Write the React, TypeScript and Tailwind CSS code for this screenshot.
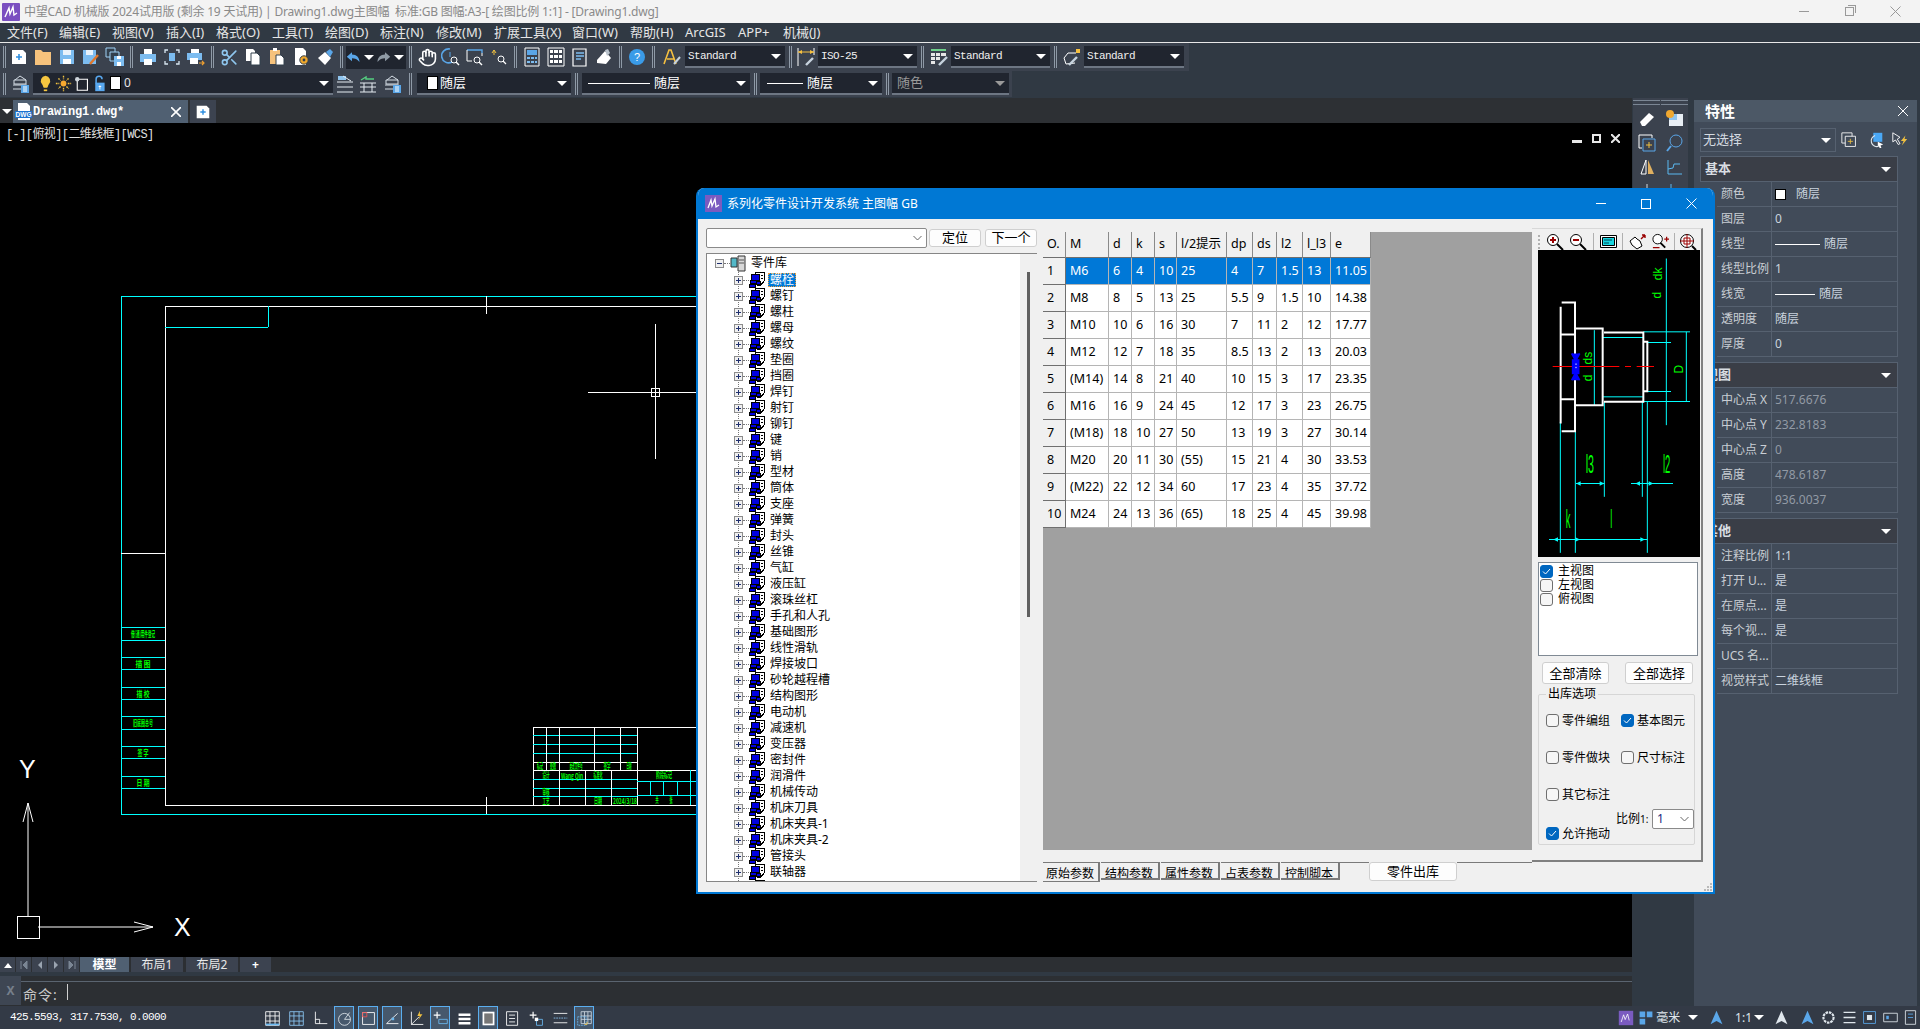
import React from "react";
import { Hand, Scissors } from "lucide-react";

const mono = "font-['Liberation_Mono','Noto_Sans_CJK_SC',monospace]";

const Svg = ({ children, size = 20 }: { children: React.ReactNode; size?: number }) => (
  <svg width={size} height={size} viewBox="0 0 20 20" fill="none">
    {children}
  </svg>
);

const Caret = ({ gray }: { gray?: boolean }) => (
  <span className={`h-0 w-0 border-x-[5px] border-t-[5px] border-x-transparent ${gray ? "border-t-[#9a9a9a]" : "border-t-white"}`} />
);

// ---- toolbar drawings
const icons: Record<string, React.ReactNode> = {
  file: (
    <>
      <path d="M3 3h11l3 3v11H3z" fill="#fff" />
      <path d="M10 7v6M7 10h6" stroke="#2f8fe0" strokeWidth="1.6" />
    </>
  ),
  folder: <path d="M2 3h6l2 2h8v13H2z" fill="#f6c27c" />,
  save: (
    <>
      <path d="M3 3h14v14H3z" fill="#7cbcf0" />
      <path d="M6 3h8v5H6z" fill="#e8f2fb" />
      <path d="M6 12h8v5H6z" fill="#fff" />
    </>
  ),
  saveas: (
    <>
      <path d="M2 3h13v14H2z" fill="#7cbcf0" />
      <path d="M5 3h7v5H5z" fill="#e8f2fb" />
      <path d="M9 17l8-9" stroke="#e0762a" strokeWidth="2.4" />
    </>
  ),
  saveall: (
    <>
      <path d="M1 1h9v9H1z" stroke="#9fd0f5" fill="#33404d" />
      <path d="M5 5h9v9H5z" stroke="#9fd0f5" fill="#33404d" />
      <path d="M9 9h10v10H9z" fill="#7cbcf0" />
      <path d="M12 9h4v3h-4zM12 15h4v4h-4z" fill="#fff" />
    </>
  ),
  print: (
    <>
      <path d="M6 2h8v5H6z" fill="#fff" />
      <path d="M2 7h16v8H2z" fill="#7cbcf0" />
      <path d="M6 12h8v6H6z" fill="#fff" />
    </>
  ),
  preview: (
    <>
      <path d="M3 6V3h3M14 3h3v3M17 14v3h-3M6 17H3v-3" stroke="#d9e7f2" strokeWidth="1.3" />
      <path d="M7 6h6v8H7z" fill="#7cbcf0" />
    </>
  ),
  publish: (
    <>
      <path d="M5 2h8v4H5z" fill="#fff" />
      <path d="M1 6h15v7H1z" fill="#7cbcf0" />
      <path d="M4 11h8v6H4z" fill="#fff" />
      <path d="M13 16h5m-2-2l2 2-2 2" stroke="#f0a030" strokeWidth="1.2" />
    </>
  ),
  copy: (
    <>
      <path d="M3 2h7l2 2v10H3z" fill="#fff" />
      <path d="M8 6h6l3 3v9H8z" fill="#fff" stroke="#33404d" />
    </>
  ),
  paste: (
    <>
      <path d="M3 3h10v14H3z" fill="#f6c27c" />
      <path d="M6 1h4v3H6z" fill="#fff" />
      <path d="M9 8h5l3 3v7H9z" fill="#fff" stroke="#33404d" />
    </>
  ),
  match: (
    <>
      <path d="M4 1h8l3 3v14H4z" fill="#fff" />
      <circle cx="13" cy="13" r="4.2" fill="#f0a82c" stroke="#33404d" />
      <circle cx="13" cy="13" r="1.4" fill="#33404d" />
    </>
  ),
  brush: (
    <>
      <path d="M3 11l7-6 6 6-6 7z" fill="#fff" />
      <path d="M11 5l4-3 3 3-3 5z" fill="#5aa6e8" />
    </>
  ),
  undo: <path d="M8 3L1 9l7 6v-4c4 0 7 1 10 5 0-6-4-10-10-10z" fill="#5aa6e8" />,
  redo: <path d="M12 3l7 6-7 6v-4c-4 0-7 1-10 5 0-6 4-10 10-10z" fill="#8f9aa5" />,
  realtime: (
    <>
      <path d="M9 2a7 7 0 1 0 2 13" stroke="#5aa6e8" strokeWidth="1.6" />
      <path d="M9 5v5" stroke="#5aa6e8" />
      <circle cx="13" cy="13" r="3" stroke="#fff" />
      <path d="M15 15l3 3" stroke="#fff" strokeWidth="1.4" />
    </>
  ),
  zoomwin: (
    <>
      <path d="M2 3h15v3" stroke="#5aa6e8" strokeWidth="1.4" />
      <path d="M2 3v11h5M17 6v3" stroke="#fff" />
      <circle cx="12" cy="13" r="3" stroke="#fff" />
      <path d="M14 15l3 3" stroke="#fff" strokeWidth="1.4" />
    </>
  ),
  zoomprev: (
    <>
      <path d="M3 6l2-3 2 3M5 3v5" stroke="#f0c040" />
      <circle cx="12" cy="12" r="3" stroke="#fff" />
      <path d="M14 14l3 3" stroke="#fff" strokeWidth="1.3" />
    </>
  ),
  calc: (
    <>
      <path d="M3 1h14v18H3z" stroke="#fff" />
      <path d="M5 3h10v5H5z" fill="#5aa6e8" />
      <path d="M5 10h3v2H5zM9 10h3v2H9zM13 10h2v2h-2zM5 14h3v2H5zM9 14h3v2H9zM13 14h2v2h-2z" fill="#7cbcf0" />
    </>
  ),
  grid: (
    <>
      <path d="M2 1h16v18H2z" stroke="#fff" />
      <path d="M4 3h3v3H4zM8 3h4v3H8zM13 3h3v3h-3zM4 8h3v3H4zM8 8h4v3H8zM13 8h3v3h-3zM4 13h3v3H4zM8 13h4v3H8zM13 13h3v3h-3z" fill="#fff" />
    </>
  ),
  props: (
    <>
      <path d="M3 2h13v17H3z" stroke="#fff" strokeWidth="1.2" />
      <path d="M6 6h8M6 9h8M6 12h5" stroke="#7cbcf0" strokeWidth="1.4" />
    </>
  ),
  paper: (
    <>
      <path d="M3 13l8-9 6 7-5 6-9-1z" fill="#fff" />
      <path d="M11 3l3-1 2 4-3 3z" fill="#b9c2cb" />
    </>
  ),
  help: (
    <>
      <circle cx="10" cy="10" r="8" fill="#3a9be8" />
      <text x="10" y="14" fontSize="11" textAnchor="middle" fill="#fff" fontFamily="Liberation Sans">?</text>
    </>
  ),
  textstyle: (
    <>
      <path d="M2 17L7 3h2l5 14M5 12h7" stroke="#f6c040" strokeWidth="1.6" />
      <path d="M12 17l6-7" stroke="#c7d3de" strokeWidth="2" />
    </>
  ),
  dim: (
    <>
      <path d="M1 1v18M17 1v7" stroke="#fff" />
      <path d="M1 5l4-2v4zM17 5l-4-2v4z" fill="#f6c040" />
      <path d="M1 5h16" stroke="#f6c040" />
      <path d="M9 18l7-7" stroke="#c7d3de" strokeWidth="2.4" />
    </>
  ),
  table: (
    <>
      <path d="M2 2h15v2H2z" fill="#6fd08a" />
      <path d="M2 6h4v3H2zM7 6h4v3H7zM12 6h5v3h-5zM2 10h4v3H2zM7 10h4v3H7zM2 14h4v3H2z" fill="#e6e6e6" />
      <path d="M10 18l8-8" stroke="#c7d3de" strokeWidth="2.4" />
    </>
  ),
  leader: (
    <>
      <path d="M14 2h4v4h-4z" fill="#f6c040" />
      <path d="M2 11l4-5h8M2 11l2 6M4 17l9-1" stroke="#fff" />
      <path d="M7 18l8-8" stroke="#c7d3de" strokeWidth="2.4" />
    </>
  ),
  layers: (
    <>
      <path d="M5 6l5-4 6 4M3 11h14M3 15h8" stroke="#d6dee6" />
      <path d="M4 6h12v4H4z" stroke="#d6dee6" />
      <path d="M11 11h8v8h-8z" fill="#5aa6e8" />
      <path d="M13 13h4M13 15h4M13 17h4" stroke="#fff" />
    </>
  ),
  bulb: (
    <>
      <path d="M10 1a6 6 0 0 0-4 10c1 1 1 3 2 4h4c1-1 1-3 2-4a6 6 0 0 0-4-10z" fill="#f6c640" />
      <path d="M8 17h4v2H8z" fill="#f6c640" />
    </>
  ),
  sun: (
    <>
      <circle cx="10" cy="10" r="3.4" fill="#f6a930" />
      <path d="M10 1v4M10 15v4M1 10h4M15 10h4M4 4l2.500 2.500M13.500 13.500L16 16M16 4l-2.500 2.500M6.500 13.500L4 16" stroke="#f6c640" strokeWidth="1.6" strokeDasharray="2 1" />
    </>
  ),
  frozen: (
    <>
      <path d="M5 5h12v13H5z" stroke="#fff" strokeWidth="1.3" />
      <circle cx="5" cy="5" r="2.6" fill="#cfd6dc" />
    </>
  ),
  lock: (
    <>
      <path d="M6 10V5a3.500 3.500 0 0 1 7 0" stroke="#58a8f0" strokeWidth="1.8" />
      <path d="M5 9h11v10H5z" fill="#58a8f0" />
      <path d="M10.500 12l2 2h-4z" fill="#fff" />
      <path d="M10 14h1v3h-1z" fill="#fff" />
    </>
  ),
  layerPrev: (
    <>
      <path d="M3 2h8v4H3z" fill="#8fc4ee" />
      <path d="M8 2l8 5M2 8h16M2 13h16M2 18h16" stroke="#e6ecf2" />
    </>
  ),
  layerIso: (
    <>
      <path d="M3 6l5-3v2h8" stroke="#54d080" strokeWidth="1.4" />
      <path d="M2 9h16M2 13h16M2 18h16" stroke="#e6ecf2" />
      <path d="M6 9v9M14 9v9" stroke="#e6ecf2" />
    </>
  ),
};

const Ico = ({ n, w = "w-[24px]" }: { n: string; w?: string }) => (
  <span className={`flex h-full shrink-0 items-center justify-center ${w}`}>
    <Svg>{icons[n]}</Svg>
  </span>
);

const Sep = ({ w = "w-[9px]" }: { w?: string }) => (
  <span className={`flex h-full shrink-0 items-center justify-center gap-[1px] ${w}`}>
    <span className="h-[22px] w-[1px] bg-[#8f9aa7]" />
    <span className="h-[22px] w-[1px] bg-[#8f9aa7]" />
  </span>
);

const Combo = ({ w, children, gray }: { w: string; children: React.ReactNode; gray?: boolean }) => (
  <span className={`flex h-[22px] shrink-0 items-center justify-between border-b-2 border-[#6d7683] bg-[#20252f] pl-[3px] pr-[4px] ${w}`}>
    <span className="flex min-w-0 items-center">{children}</span>
    <Caret gray={gray} />
  </span>
);

const Std = ({ t }: { t: string }) => (
  <span className={`${mono} text-[11px] tracking-[-0.6px] text-[#f0f0f0]`}>{t}</span>
);

const menu: [string, string][] = [
  ["文件(F)", "w-[52px]"],
  ["编辑(E)", "w-[53px]"],
  ["视图(V)", "w-[54px]"],
  ["插入(I)", "w-[50px]"],
  ["格式(O)", "w-[56px]"],
  ["工具(T)", "w-[53px]"],
  ["绘图(D)", "w-[55px]"],
  ["标注(N)", "w-[56px]"],
  ["修改(M)", "w-[58px]"],
  ["扩展工具(X)", "w-[78px]"],
  ["窗口(W)", "w-[58px]"],
  ["帮助(H)", "w-[55px]"],
  ["ArcGIS", "w-[53px]"],
  ["APP+", "w-[45px]"],
  ["机械(J)", "w-[50px]"],
];

function TopBars() {
  return (
    <>
      <div className="flex h-[23px] items-center bg-[#f3f3f3]">
        <svg width="18" height="18" viewBox="0 0 18 18" className="ml-[2px] mr-[4px]">
          <rect width="18" height="18" rx="1" fill="#7a4fc0" />
          <path d="M3 14l4-9 1 6 3-7 1 8 3-2" stroke="#fff" strokeWidth="1.4" fill="none" />
        </svg>
        <span className="whitespace-nowrap text-[12px] tracking-[-0.2px] text-[#8a8a8a]">
          中望CAD 机械版 2024试用版 (剩余 19 天试用) | Drawing1.dwg主图幅&nbsp;&nbsp;标准:GB 图幅:A3-[ 绘图比例 1:1] - [Drawing1.dwg]
        </span>
        <div className="ml-auto flex items-center pr-[19px] text-[#8f8f8f]">
          <span className="mr-[36px] h-[1px] w-[10px] bg-[#999]" />
          <span className="relative mr-[36px] h-[9px] w-[9px] border border-[#999]">
            <span className="absolute -right-[3px] -top-[3px] h-[8px] w-[8px] border-r border-t border-[#999]" />
          </span>
          <svg width="11" height="11" viewBox="0 0 11 11"><path d="M.500.500l10 10M10.500.500l-10 10" stroke="#999" /></svg>
        </div>
      </div>
      <div className="flex h-[20px] items-center border-b border-[#e8e8e8] bg-[#303943] pl-[7px] text-[13px] leading-none text-[#e6e6e6]">
        {menu.map(([t, w]) => (
          <span key={t} className={`shrink-0 whitespace-nowrap ${w}`}>{t}</span>
        ))}
      </div>
      <div className="h-[55px] bg-[#303943]">
        <div className="flex h-[28px] w-[1189px] items-center bg-[#3b424e] pl-[2px]">
          <Sep w="w-[5px]" />
          {["file", "folder", "save", "saveas", "saveall"].map((n) => <Ico key={n} n={n} />)}
          <Sep />
          {["print", "preview", "publish"].map((n) => <Ico key={n} n={n} />)}
          <Sep />
          <span className="flex h-full w-[24px] shrink-0 items-center justify-center"><Scissors size={19} color="#8fc7ef" /></span>
          {["copy", "paste", "match", "brush"].map((n) => <Ico key={n} n={n} />)}
          <Sep />
          <span className="flex h-[23px] w-[60px] shrink-0 items-center bg-[#20252f]">
            <span className="flex w-[15px] justify-center"><Svg size={15}>{icons.undo}</Svg></span>
            <span className="flex w-[15px] justify-center"><Caret /></span>
            <span className="flex w-[15px] justify-center"><Svg size={15}>{icons.redo}</Svg></span>
            <span className="flex w-[15px] justify-center"><Caret /></span>
          </span>
          <Sep />
          <span className="flex h-full w-[24px] shrink-0 items-center justify-center"><Hand size={19} color="#fff" /></span>
          {["realtime", "zoomwin", "zoomprev"].map((n) => <Ico key={n} n={n} />)}
          <Sep />
          {["calc", "grid", "props", "paper"].map((n) => <Ico key={n} n={n} />)}
          <Sep />
          <Ico n="help" />
          <Sep />
          <Ico n="textstyle" w="w-[27px]" />
          <Combo w="w-[100px]"><Std t="Standard" /></Combo>
          <Sep w="w-[10px]" />
          <Ico n="dim" w="w-[23px]" />
          <Combo w="w-[99px]"><Std t="ISO-25" /></Combo>
          <Sep w="w-[10px]" />
          <Ico n="table" />
          <Combo w="w-[99px]"><Std t="Standard" /></Combo>
          <Sep w="w-[10px]" />
          <Ico n="leader" />
          <Combo w="w-[100px]"><Std t="Standard" /></Combo>
        </div>
        <div className="flex h-[26px] w-[1012px] items-center bg-[#3b424e] pl-[2px]">
          <Sep w="w-[5px]" />
          <Ico n="layers" w="w-[26px]" />
          <Combo w="w-[300px]">
            <span className="ml-[1px] flex items-center">
              <span className="w-[18px]"><Svg size={17}>{icons.bulb}</Svg></span>
              <span className="w-[18px]"><Svg size={17}>{icons.sun}</Svg></span>
              <span className="w-[18px]"><Svg size={17}>{icons.frozen}</Svg></span>
              <span className="w-[19px]"><Svg size={17}>{icons.lock}</Svg></span>
              <span className="h-[14px] w-[11px] border border-black bg-white" />
              <span className="ml-[3px] text-[12px] text-[#e6e6e6]">0</span>
            </span>
          </Combo>
          <Ico n="layerPrev" w="w-[23px]" />
          <Ico n="layerIso" />
          <Ico n="layers" />
          <Sep w="w-[13px]" />
          <Combo w="w-[154px]">
            <span className="ml-[7px] h-[14px] w-[11px] border border-black bg-white" />
            <span className="ml-[2px] text-[13px] text-white">随层</span>
          </Combo>
          <Sep w="w-[11px]" />
          <Combo w="w-[168px]">
            <span className="ml-[3px] h-[1px] w-[62px] bg-white" />
            <span className="ml-[4px] text-[13px] text-white">随层</span>
          </Combo>
          <Sep w="w-[10px]" />
          <Combo w="w-[122px]">
            <span className="ml-[4px] h-[1px] w-[36px] bg-white" />
            <span className="ml-[4px] text-[13px] text-white">随层</span>
          </Combo>
          <Sep w="w-[10px]" />
          <Combo w="w-[117px]" gray><span className="ml-[2px] text-[13px] text-[#9a9a9a]">随色</span></Combo>
        </div>
      </div>
    </>
  );
}

// ---- model space
const cy = "#00ffff";
const gn = "#00ff00";
const sideRows: [number, number, string, number][] = [
  [627, 640, "借(通)用件登记", 24],
  [657, 669, "描  图", 15],
  [687, 699, "描  校", 13],
  [716, 729, "旧底图总号", 20],
  [746, 758, "签  字", 11],
  [776, 788, "日  期", 13],
];

function Drawing() {
  const L = (x1: number, y1: number, x2: number, y2: number, c = "#fff") => (
    <line key={`${x1}-${y1}-${x2}-${y2}`} x1={x1} y1={y1} x2={x2} y2={y2} stroke={c} />
  );
  const T = (x: number, y: number, s: string, len: number) => (
    <text key={`${x}-${y}`} x={x - len / 2} y={y} fontSize="8" fontWeight="700" fill={gn} textLength={len} lengthAdjust="spacingAndGlyphs" fontFamily="Noto Sans CJK SC">{s}</text>
  );
  return (
    <svg className="absolute inset-0" width="1632" height="834" viewBox="0 123 1632 834" shapeRendering="crispEdges">
      {L(121, 296, 1000, 296, cy)}
      {L(121, 296, 121, 814, cy)}
      {L(121, 814, 1000, 814, cy)}
      {L(165, 306, 1000, 306)}
      {L(165, 306, 165, 805)}
      {L(165, 805, 1000, 805)}
      {L(165, 327, 268, 327, cy)}
      {L(268, 306, 268, 327, cy)}
      {L(486, 296, 486, 314)}
      {L(486, 797, 486, 814)}
      {L(121, 553, 165, 553)}
      {sideRows.map(([a, b, s, len]) => (
        <g key={a}>
          {L(121, a, 165, a, cy)}
          {L(121, b, 165, b, cy)}
          {T(143, a + 10, s, len)}
        </g>
      ))}
      {/* title block */}
      {L(533, 727, 700, 727)}
      {L(533, 727, 533, 805)}
      {[735, 744, 753].map((y) => L(533, y, 637, y, cy))}
      {L(533, 762, 637, 762)}
      {L(533, 770, 700, 770)}
      {[779, 788, 796].map((y) => L(533, y, 637, y, cy))}
      {L(546, 727, 546, 770)}
      {L(559, 727, 559, 805)}
      {L(594, 727, 594, 770)}
      {L(620, 727, 620, 770)}
      {L(637, 727, 637, 805)}
      {L(585, 770, 585, 805)}
      {L(611, 770, 611, 805)}
      {L(637, 781, 700, 781, cy)}
      {L(637, 795, 700, 795, cy)}
      {L(650, 781, 650, 795, cy)}
      {L(663, 781, 663, 795, cy)}
      {L(677, 781, 677, 795, cy)}
      {L(690, 770, 690, 805, cy)}
      {T(540, 769, "标记", 6)}
      {T(553, 769, "处数", 6)}
      {T(576, 769, "更改文件号", 13)}
      {T(607, 769, "签字", 7)}
      {T(629, 769, "日期", 5)}
      {T(546, 778, "设计", 7)}
      {T(572, 779, "Wang Qin", 22)}
      {T(598, 778, "标准化", 9)}
      {T(546, 795, "审核", 7)}
      {T(546, 804, "工艺", 7)}
      {T(598, 804, "日期", 8)}
      {T(625, 804, "2024/3/18", 24)}
      {T(664, 778, "阶段标记", 16)}
      {T(657, 803, "共", 3)}
      {T(671, 803, "张", 3)}
      {/* crosshair */}
      {L(588, 392, 722, 392)}
      {L(655, 324, 655, 459)}
      <rect x="651" y="388" width="8" height="8" stroke="#fff" fill="none" />
      {/* ucs */}
      <path d="M28 916V803M23 822l5-19 5 19M38 927H153M134 922l19 5-19 5" stroke="#fff" fill="none" shapeRendering="auto" />
      <rect x="17" y="916" width="22" height="22" stroke="#fff" fill="none" />
      <text x="19" y="778" fontSize="25" fill="#fff" fontFamily="Liberation Sans">Y</text>
      <text x="174" y="936" fontSize="25" fill="#fff" fontFamily="Liberation Sans">X</text>
    </svg>
  );
}

function Preview() {
  const w = (d: string) => <path key={d} d={d} stroke="#fff" strokeWidth="6" fill="none" />;
  const c = (d: string) => <path key={d} d={d} stroke={cy} strokeWidth="3" fill="none" />;
  const rot = (x: number, y: number, s: string, fs = 36) => (
    <text key={`${x}${y}`} transform={`translate(${x} ${y}) rotate(-90)`} fontSize={fs} fill={gn} fontFamily="Liberation Sans">{s}</text>
  );
  const thin = (x: number, y: number, s: string, len: number) => (
    <text key={`${x}${y}`} x={x} y={y} fontSize="76" fill={gn} textLength={len} lengthAdjust="spacingAndGlyphs" fontFamily="Liberation Sans">{s}</text>
  );
  return (
    <svg width="162" height="307" viewBox="24 75 486 920" className="block bg-black">
      {["M409 100V600", "M340 320H480M340 529H480M469 320V529M352 352H423M352 499H423M217 337H340M217 515H340M193 315V540M223 530V815M337 530V815M352 530V983M91 590V983M136 618V983M138 775H223M303 775H429M57 943H352"].map(c)}
      {["M95 232H135V618H95M92 245V595M95 328H135M95 522H135M135 310H218V540H135M222 322H340V530H222M340 350H352V498H340"].map(w)}
      <path d="M68 424H268M285 424H303M320 424H372" stroke="#f00" strokeWidth="3" />
      <path d="M125 385l12 22 12-22M125 465l12-22 12 22M128 405h18v40h-18z" stroke="#0000ff" strokeWidth="5" fill="#0000ff" />
      <path d="M138 415v20" stroke="#fff" strokeWidth="3" strokeDasharray="4 6" />
      <path d="M138 775l14-7v14zM223 775l-14-7v14zM316 775l14-7v14zM370 775l-14-7v14zM70 943l14-7v14zM150 943l-14-7v14zM345 943l-14-7v14z" fill={cy} />
      {rot(395, 165, "dk")}
      {rot(393, 220, "d")}
      {rot(186, 418, "ds")}
      {rot(186, 468, "d")}
      {rot(460, 445, "D")}
      {thin(167, 745, "l3", 25)}
      {thin(399, 745, "l2", 22)}
      {thin(107, 908, "k", 14)}
      {thin(241, 908, "l", 6)}
    </svg>
  );
}

// ---- dialog
const treeItems = "螺栓 螺钉 螺柱 螺母 螺纹 垫圈 挡圈 焊钉 射钉 铆钉 键 销 型材 筒体 支座 弹簧 封头 丝锥 气缸 液压缸 滚珠丝杠 手孔和人孔 基础图形 线性滑轨 焊接坡口 砂轮越程槽 结构图形 电动机 减速机 变压器 密封件 润滑件 机械传动 机床刀具 机床夹具-1 机床夹具-2 管接头 联轴器".split(" ");

const TreeBox = ({ open }: { open?: boolean }) => (
  <span className="relative z-10 flex h-[9px] w-[9px] shrink-0 items-center justify-center border border-[#8c8c8c] bg-[#f0f0f0]">
    <span className="h-[1px] w-[5px] bg-[#20306e]" />
    {!open && <span className="absolute h-[5px] w-[1px] bg-[#20306e]" />}
  </span>
);

const PartIcon = () => (
  <svg width="16" height="16" viewBox="0 0 16 16" className="shrink-0" shapeRendering="crispEdges">
    <path d="M6.500.500h9v8l-4 5h-3z" fill="#fff" stroke="#000" />
    <path d="M2.500 2.500h8v6h-8z" fill="#0000e0" stroke="#000" />
    <path d="M11.500 3.500h2M11.500 6.500h2" stroke="#000" />
    <path d="M1.500 8.500h6v3h-6zM.500 12.500h6v3h-6z" fill="#0000e0" stroke="#000" />
    <path d="M7.500 9.500h4v3h-4z" fill="#0000e0" stroke="#000" />
  </svg>
);

function Tree() {
  return (
    <div className="mt-[5px] flex h-[629px] border border-r-0 border-[#868686] bg-white">
      <div className="relative min-w-0 flex-1 overflow-hidden text-[12px] leading-none text-black">
        <span className="absolute bottom-0 left-[31px] top-[18px] border-l border-dotted border-[#777]" />
        <div className="flex h-[18px] items-center pl-[8px]">
          <TreeBox open />
          <span className="w-[6px] border-t border-dotted border-[#777]" />
          <svg width="16" height="17" viewBox="0 0 16 17" className="shrink-0">
            <path d="M1 3h6v9H1z" fill="#53b8c8" stroke="#333" />
            <path d="M8 1h7v15H8z" fill="#d8d8d8" stroke="#333" />
            <path d="M9 5h5M9 8h5" stroke="#555" />
          </svg>
          <span className="ml-[5px]">零件库</span>
        </div>
        {[...treeItems, ""].map((t, i) => (
          <div key={t} className="flex h-[16px] items-center pl-[27px]">
            <TreeBox />
            <span className="w-[6px] border-t border-dotted border-[#777]" />
            <PartIcon />
            <span className={`ml-[3px] px-[2px] py-[1px] ${i === 0 ? "bg-[#0078d7] text-white outline-1 -outline-offset-1 outline-dotted outline-[#f0a040]" : ""}`}>{t}</span>
          </div>
        ))}
      </div>
      <div className="w-[17px] shrink-0 bg-[#f0f0f0]">
        <div className="mx-auto mt-[18px] h-[345px] w-[3px] bg-[#606060]" />
      </div>
    </div>
  );
}

const cols = ["w-[23px]", "w-[43px]", "w-[23px]", "w-[23px]", "w-[22px]", "w-[50px]", "w-[26px]", "w-[24px]", "w-[26px]", "w-[28px]", "w-[40px]"];
const head = ["O.", "M", "d", "k", "s", "l/2提示", "dp", "ds", "l2", "l_l3", "e"];
const rows = [
  ["1", "M6", "6", "4", "10", "25", "4", "7", "1.5", "13", "11.05"],
  ["2", "M8", "8", "5", "13", "25", "5.5", "9", "1.5", "10", "14.38"],
  ["3", "M10", "10", "6", "16", "30", "7", "11", "2", "12", "17.77"],
  ["4", "M12", "12", "7", "18", "35", "8.5", "13", "2", "13", "20.03"],
  ["5", "(M14)", "14", "8", "21", "40", "10", "15", "3", "17", "23.35"],
  ["6", "M16", "16", "9", "24", "45", "12", "17", "3", "23", "26.75"],
  ["7", "(M18)", "18", "10", "27", "50", "13", "19", "3", "27", "30.14"],
  ["8", "M20", "20", "11", "30", "(55)", "15", "21", "4", "30", "33.53"],
  ["9", "(M22)", "22", "12", "34", "60", "17", "23", "4", "35", "37.72"],
  ["10", "M24", "24", "13", "36", "(65)", "18", "25", "4", "45", "39.98"],
];

function PartTable() {
  return (
    <div className="h-[618px] w-[489px] bg-[#a0a0a0] text-[12.5px] leading-none text-black">
      <div className="flex h-[26px]">
        {head.map((h, i) => (
          <span key={h} className={`flex h-full shrink-0 items-center overflow-hidden whitespace-nowrap border-b border-r border-b-[#6f6f6f] border-r-[#8a8a8a] bg-[#f0f0f0] pl-[4px] ${cols[i]}`}>{h}</span>
        ))}
      </div>
      {rows.map((r, ri) => (
        <div key={r[0]} className="flex h-[27px]">
          {r.map((c, i) => (
            <span
              key={i}
              className={`flex h-full shrink-0 items-center whitespace-nowrap border-b border-r pl-[4px] ${cols[i]} ${
                i === 0
                  ? "border-b-[#6f6f6f] border-r-[#6f6f6f] bg-[#f0f0f0]"
                  : ri === 0
                    ? "border-[#b5b5b5] bg-[#0078d7] text-white"
                    : "border-[#b5b5b5] bg-white"
              }`}
            >
              {c}
            </span>
          ))}
        </div>
      ))}
    </div>
  );
}

const Cb = ({ on }: { on?: boolean }) => (
  <span className={`flex h-[13px] w-[13px] shrink-0 items-center justify-center rounded-[3px] border ${on ? "border-[#0067c0] bg-[#0067c0]" : "border-[#6f6f6f] bg-[#f6f6f6]"}`}>
    {on && <svg width="9" height="9" viewBox="0 0 9 9"><path d="M1 4.500l2.500 2.500L8 2" stroke="#fff" fill="none" /></svg>}
  </span>
);

const Opt = ({ on, t, w }: { on?: boolean; t: string; w?: string }) => (
  <span className={`flex items-center gap-[3px] ${w ?? ""}`}>
    <Cb on={on} />
    <span>{t}</span>
  </span>
);

const Btn = ({ t, w }: { t: string; w: string }) => (
  <span className={`flex shrink-0 items-center justify-center rounded-[3px] border border-[#cfcfcf] bg-[#fdfdfd] text-[13px] text-black ${w}`}>{t}</span>
);

const ToolIcon = ({ children, w = "w-[23px]" }: { children: React.ReactNode; w?: string }) => (
  <span className={`flex h-full shrink-0 items-center justify-center ${w}`}>{children}</span>
);

const Lens = ({ sign }: { sign: "+" | "-" }) => (
  <svg width="18" height="18" viewBox="0 0 18 18">
    <circle cx="7" cy="7" r="5.500" fill="#fff" stroke="#000" />
    <path d="M11 11l6 6" stroke="#000" strokeWidth="2" />
    <path d={sign === "+" ? "M4 7h6M7 4v6" : "M4 7h6"} stroke="#900" strokeWidth="2" />
  </svg>
);

function RightPane() {
  return (
    <div className="h-[634px] w-[171px] shrink-0 border-b-2 border-r-2 border-t border-b-[#808080] border-r-[#808080] border-t-[#d8d8d8] text-[12px] leading-none text-black">
      <div className="ml-[6px] flex h-[21px] items-center pt-[4px]">
        <span className="h-[14px] w-[3px] border-l-2 border-dotted border-[#b0b0b0]" />
        <ToolIcon w="w-[28px]"><Lens sign="+" /></ToolIcon>
        <ToolIcon w="w-[18px]"><Lens sign="-" /></ToolIcon>
        <span className="ml-[6px] h-[17px] w-[1px] bg-[#b0b0b0]" />
        <ToolIcon w="w-[28px]">
          <svg width="17" height="13" viewBox="0 0 17 13"><path d="M.500.500h16v12H.500z" fill="#fff" stroke="#000" /><path d="M2.500 2.500h12v8h-12z" fill="#19d6e0" stroke="#000" /><path d="M4 5h8M4 8h5" stroke="#045" /></svg>
        </ToolIcon>
        <span className="h-[17px] w-[1px] bg-[#b0b0b0]" />
        <ToolIcon w="w-[28px]">
          <svg width="17" height="16" viewBox="0 0 17 16"><path d="M1 7l5-4 2 2 3 2 2 5-5 3-5-4z" fill="#fff" stroke="#000" /><path d="M12 5l4-4M16 1v3M16 1h-3" stroke="#900" strokeWidth="1.4" /></svg>
        </ToolIcon>
        <ToolIcon w="w-[18px]">
          <svg width="19" height="18" viewBox="0 0 19 18"><circle cx="7" cy="6" r="5" fill="#fff" stroke="#000" /><path d="M10 10l5 5" stroke="#000" strokeWidth="2" /><path d="M14 6h5M16.500 3.500v5M2 15h7" stroke="#900" strokeWidth="1.300" /></svg>
        </ToolIcon>
        <span className="ml-[5px] h-[17px] w-[1px] bg-[#b0b0b0]" />
        <ToolIcon w="w-[26px]">
          <svg width="18" height="18" viewBox="0 0 18 18"><circle cx="8" cy="8" r="6.500" fill="#fff" stroke="#000" /><path d="M1 8h14M8 1v14M5 5h6v6H5z" stroke="#900" fill="none" /><path d="M13 13l4 4" stroke="#000" strokeWidth="2" /></svg>
        </ToolIcon>
      </div>
      <div className="ml-[6px] h-[307px] w-[162px]"><Preview /></div>
      <div className="ml-[6px] mt-[5px] h-[94px] w-[160px] border border-[#808a94] bg-white pl-[1px] pt-[1px]">
        {[["主视图", true], ["左视图", false], ["俯视图", false]].map(([t, on]) => (
          <div key={t as string} className="flex h-[14px] items-center gap-[5px]">
            <Cb on={on as boolean} />
            <span className="text-[12px]">{t as string}</span>
          </div>
        ))}
      </div>
      <div className="ml-[10px] mt-[6px] flex gap-[16px]">
        <Btn t="全部清除" w="h-[22px] w-[67px]" />
        <Btn t="全部选择" w="h-[22px] w-[68px]" />
      </div>
      <div className="relative ml-[6px] mt-[10px] h-[151px] w-[157px] rounded-[2px] border border-[#d6d6d6] pl-[7px] pt-[7px]">
        <span className="absolute -top-[7px] left-[7px] bg-[#f0f0f0] px-[2px] text-[12px]">出库选项</span>
        <div className="flex h-[37px] items-center"><Opt t="零件编组" w="w-[75px]" /><Opt on t="基本图元" /></div>
        <div className="flex h-[37px] items-center"><Opt t="零件做块" w="w-[75px]" /><Opt t="尺寸标注" /></div>
        <div className="flex h-[37px] items-center"><Opt t="其它标注" /></div>
        <div className="flex h-[32px]">
          <span className="flex w-[71px] items-end pb-[5px]"><Opt on t="允许拖动" /></span>
          <span className="-mt-[4px] flex h-[20px] items-center">
            <span className="w-[36px]">比例<span className="text-[10px]">1:</span></span>
            <span className="flex h-[20px] w-[42px] items-center justify-between rounded-[2px] border border-[#8a8a8a] bg-white px-[4px] text-[#1a2a80]">
              1
              <svg width="9" height="6" viewBox="0 0 9 6"><path d="M.500 1l4 4 4-4" stroke="#666" fill="none" /></svg>
            </span>
          </span>
        </div>
      </div>
    </div>
  );
}

function Dialog() {
  const tabs = ["结构参数", "属性参数", "占表参数", "控制脚本"];
  return (
    <div className="absolute left-[696px] top-[188px] h-[706px] w-[1019px] overflow-hidden rounded-t-[8px] border-x-2 border-b-2 border-[#0078d4] bg-[#f0f0f0]">
      <div className="-mx-[2px] flex h-[31px] items-center bg-[#0078d4] pl-[9px] text-[12px] text-white">
        <svg width="17" height="17" viewBox="0 0 17 17" className="mr-[5px]">
          <rect width="17" height="17" fill="#7a5bc0" />
          <path d="M3 13l3-8 1 6 3-7 1 8 3-2" stroke="#fff" strokeWidth="1.300" fill="none" />
        </svg>
        <span className="whitespace-nowrap">系列化零件设计开发系统 主图幅 GB</span>
        <div className="ml-auto flex items-center">
          <span className="h-[1px] w-[10px] bg-white" />
          <span className="ml-[35px] h-[10px] w-[10px] border border-white" />
          <svg width="11" height="11" viewBox="0 0 11 11" className="ml-[35px] mr-[18px]"><path d="M.500.500l10 10M10.500.500l-10 10" stroke="#fff" /></svg>
        </div>
      </div>
      <div className="flex pl-[8px] pt-[9px]">
        <div className="w-[331px] shrink-0">
          <div className="flex h-[20px] items-center">
            <span className="flex h-[20px] w-[221px] shrink-0 items-center justify-end rounded-[2px] border border-[#8a8a8a] bg-white pr-[4px]">
              <svg width="9" height="6" viewBox="0 0 9 6"><path d="M.500 1l4 4 4-4" stroke="#666" fill="none" /></svg>
            </span>
            <Btn t="定位" w="ml-[2px] h-[18px] w-[52px]" />
            <Btn t="下一个" w="ml-[4px] h-[18px] w-[52px]" />
          </div>
          <Tree />
        </div>
        <div className="ml-[6px] w-[489px] shrink-0 pt-[4px]">
          <PartTable />
          <div className="mt-[12px] flex h-[20px] items-start">
            <span className="h-[20px] w-[57px] overflow-hidden border-b border-r-2 border-t border-[#7a7a7a] pl-[3px] text-[12px] leading-[22px] text-black">原始参数</span>
            {tabs.map((t) => (
              <span key={t} className="ml-[1px] h-[18px] w-[59px] overflow-hidden border-b-2 border-r-2 border-t border-[#7a7a7a] bg-[#f0f0f0] pl-[4px] text-[12px] leading-[21px] text-black">{t}</span>
            ))}
            <span className="h-[1px] w-[29px] bg-[#7a7a7a]" />
            <Btn t="零件出库" w="h-[19px] w-[88px]" />
            <span className="h-[1px] flex-1 bg-[#7a7a7a]" />
          </div>
        </div>
        <RightPane />
      </div>
      <svg width="8" height="8" viewBox="0 0 8 8" className="absolute bottom-[1px] right-[1px]">
        <path d="M6 0h2v2H6zM3 3h2v2H3zM6 3h2v2H6zM0 6h2v2H0zM3 6h2v2H3zM6 6h2v2H6z" fill="#b9b9b9" />
      </svg>
    </div>
  );
}

// ---- right side
const Row = ({ l, children, dim }: { l: string; children?: React.ReactNode; dim?: boolean }) => (
  <div className="ml-[17px] flex h-[25px] border-b border-r border-[#566170]">
    <span className="flex w-[54px] shrink-0 items-center overflow-hidden whitespace-nowrap pl-[4px] text-[12px] text-[#c9ced4]">{l}</span>
    <span className={`flex min-w-0 flex-1 items-center border-l border-[#566170] pl-[3px] text-[12px] ${dim ? "text-[#929aa5]" : "text-[#c9d3de]"}`}>{children}</span>
  </div>
);

const Group = ({ t, cls = "" }: { t: string; cls?: string }) => (
  <div className={`flex h-[26px] items-center justify-between border border-[#566170] bg-[#3a3e47] pl-[4px] pr-[6px] text-[13px] font-bold text-[#d8dde2] ${cls}`}>
    <span>{t}</span>
    <Caret />
  </div>
);

const LineVal = ({ w }: { w: string }) => (
  <>
    <span className={`h-[1px] bg-white ${w}`} />
    <span className="ml-[4px]">随层</span>
  </>
);

function Properties() {
  return (
    <div className="mt-[2px] flex w-[223px] flex-col bg-[#414b59]">
      <div className="flex h-[22px] items-center justify-between bg-[#4c5866] pl-[11px] pr-[9px]">
        <span className="text-[15px] font-bold text-white">特性</span>
        <svg width="10" height="10" viewBox="0 0 10 10"><path d="M0 0l10 10M10 0L0 10" stroke="#fff" /></svg>
      </div>
      <div className="mt-[6px] flex h-[24px] items-center pl-[6px]">
        <span className="flex h-[24px] w-[136px] items-center justify-between border border-[#566170] pl-[2px] pr-[4px] text-[13px] text-[#d5dbe1]">
          无选择
          <Caret />
        </span>
        <span className="ml-[5px] w-[26px]"><Svg size={17}><path d="M1 1h12v12H1z" stroke="#fff" /><path d="M5 5h12v12H5z" stroke="#fff" fill="#414b59" /><path d="M11 8v6M8 11h6" stroke="#f0c040" /></Svg></span>
        <span className="w-[24px]"><Svg size={18}><path d="M7 2h10v10H7z" fill="#4aa8f5" /><path d="M9 5a6 6 0 1 0 4 12" stroke="#dfe6ec" strokeWidth="1.300" /><path d="M12 12l6 3-3 1 1 3-2 0-1-3-1 2z" fill="#fff" /></Svg></span>
        <span className="w-[20px]"><Svg size={18}><path d="M2 2l8 5-3 2 3 5-2 1-3-5-3 2z" stroke="#fff" /><path d="M16 5l-5 6h3l-2 5 6-7h-3z" fill="#f0c040" /></Svg></span>
      </div>
      <div className="ml-[6px] mt-[4px] w-[198px]">
        <Group t="基本" />
        <Row l="颜色">
          <span className="h-[11px] w-[11px] border border-black bg-white" />
          <span className="ml-[10px]">随层</span>
        </Row>
        <Row l="图层">0</Row>
        <Row l="线型"><LineVal w="w-[45px]" /></Row>
        <Row l="线型比例">1</Row>
        <Row l="线宽"><LineVal w="w-[40px]" /></Row>
        <Row l="透明度">随层</Row>
        <Row l="厚度">0</Row>
        <Group t="视图" cls="mt-[5px]" />
        <Row l="中心点 X" dim>517.6676</Row>
        <Row l="中心点 Y" dim>232.8183</Row>
        <Row l="中心点 Z" dim>0</Row>
        <Row l="高度" dim>478.6187</Row>
        <Row l="宽度" dim>936.0037</Row>
        <Group t="其他" cls="mt-[5px]" />
        <Row l="注释比例">1:1</Row>
        <Row l="打开 U...">是</Row>
        <Row l="在原点...">是</Row>
        <Row l="每个视...">是</Row>
        <Row l="UCS 名..." />
        <Row l="视觉样式">二维线框</Row>
      </div>
    </div>
  );
}

function ToolStrip() {
  const a = [
    <path key="e" d="M3 13l9-9 5 4-9 9H5z" fill="#fff" />,
    <g key="b"><path d="M2 2h13v3M2 2v13h3" stroke="#fff" /><path d="M6 6h12v12H6z" stroke="#5aa6e8" /><path d="M12 9v6M9 12h6" stroke="#f0c040" /></g>,
    <g key="m"><path d="M9 3v14H4z" stroke="#fff" /><path d="M11 3v14h6z" fill="#e0b060" /></g>,
    <path key="o" d="M4 17a6 6 0 1 1 12 0zM10 3v6" stroke="#d7dde2" />,
  ];
  const b = [
    <g key="w"><path d="M4 5h14v12H4z" fill="#e8eef4" /><path d="M4 5h8v6H4z" fill="#8fc4ee" /><circle cx="5" cy="5" r="4" fill="#f0a830" /></g>,
    <g key="z"><circle cx="11" cy="8" r="6" stroke="#5aa6e8" /><path d="M6 13l-4 5" stroke="#5aa6e8" strokeWidth="2" /></g>,
    <path key="u" d="M3 3v14h14M3 12l5-1 1-4h6" stroke="#5ab8f0" />,
    <path key="l" d="M6 3v14h11" stroke="#5ab8f0" />,
  ];
  const col = (items: React.ReactNode[]) => (
    <div className="w-[27px]">
      <div className="mt-[2px] h-[5px] border-y border-[#7b8694]" />
      <div className="mt-[2px] flex flex-col items-center gap-[4px] pt-[2px]">
        {items.map((x, i) => <Svg key={i}>{x}</Svg>)}
      </div>
    </div>
  );
  return (
    <div className="flex w-[62px] gap-[1px] pl-[1px]">
      <div className="flex h-[300px] gap-[1px] bg-[#3b424e]">
        {col(a)}
        {col(b)}
      </div>
    </div>
  );
}

const StatusBtn = ({ on, children }: { on?: boolean; children: React.ReactNode }) => (
  <span className={`mr-[4px] flex h-[23px] w-[20px] shrink-0 items-center justify-center border-x border-t ${on ? "border-[#5aaef0] bg-[#46586c]" : "border-transparent"}`}>
    <Svg size={17}>{children}</Svg>
  </span>
);

function Status() {
  const grid = "M2 2h16v16H2zM7 2v16M13 2v16M2 7h16M2 13h16";
  return (
    <div className="flex h-[23px] items-center bg-[#333a46] text-[#e8e8e8]">
      <span className={`${mono} ml-[10px] w-[252px] shrink-0 text-[11px] tracking-[-0.6px] text-white`}>425.5593, 317.7530, 0.0000</span>
      <StatusBtn><path d={grid} stroke="#fff" /><path d="M2 17h16" stroke="#6ab8f0" strokeWidth="2" /></StatusBtn>
      <StatusBtn><path d={grid} stroke="#8cc8f5" /></StatusBtn>
      <StatusBtn><path d="M4 2v14h14M4 11h5v5" stroke="#fff" /></StatusBtn>
      <StatusBtn on><circle cx="10" cy="11" r="7" stroke="#dfe6ec" /><path d="M10 11l6-8M10 11h7" stroke="#dfe6ec" /></StatusBtn>
      <StatusBtn on><path d="M3 3h14v14H3z" stroke="#fff" /><path d="M3 3h5v5H3z" stroke="#f05050" /></StatusBtn>
      <StatusBtn on><path d="M3 16L16 4M3 16h14" stroke="#fff" /><path d="M9 9h3v3H9z" fill="#6ab8f0" /></StatusBtn>
      <StatusBtn><path d="M4 2v15h14M4 17l9-9" stroke="#fff" /><path d="M14 1l-3 6h3l-2 5 5-7h-3z" fill="#f0c040" /></StatusBtn>
      <StatusBtn on><path d="M6 2v8M2 6h8" stroke="#fff" strokeWidth="1.400" /><path d="M8 11h10v5H8z" stroke="#6ab8f0" /></StatusBtn>
      <StatusBtn><path d="M3 4h14v3H3zM3 9h14v3H3zM3 14h14v3H3z" fill="#fff" /></StatusBtn>
      <StatusBtn on><path d="M3 2h14v16H3z" fill="#fff" /><path d="M5 4h10v12H5z" fill="#777" /></StatusBtn>
      <StatusBtn><path d="M3 2h13v16H3z" stroke="#fff" /><path d="M6 6h7M6 10h7M6 14h7" stroke="#fff" /></StatusBtn>
      <StatusBtn><path d="M6 2v8M2 6h8" stroke="#fff" strokeWidth="1.400" /><path d="M10 11h7v7h-7z" stroke="#6ab8f0" /><path d="M8 9h4v4H8z" fill="#fff" /></StatusBtn>
      <StatusBtn><path d="M2 4h16M2 15h16" stroke="#fff" /><path d="M2 9.500h16" stroke="#8cc8f5" strokeDasharray="2 1" /></StatusBtn>
      <StatusBtn on><path d="M6 2h12v14H6zM10 2v14M14 2v14M6 7h12M6 11h12" stroke="#cbd6df" /><path d="M2 8h10v10H2z" stroke="#6ab8f0" strokeDasharray="2 1" /><path d="M13 14v3h-3" stroke="#f0c040" /></StatusBtn>
      <div className="ml-auto flex w-[304px] shrink-0 items-center text-[12px]">
        <span className="flex w-[20px] justify-center"><Svg size={16}><rect width="18" height="18" x="1" y="1" fill="#7a5bc0" /><path d="M4 15l3-9 2 6 3-7 2 8" stroke="#fff" /></Svg></span>
        <span className="flex w-[21px] justify-center"><Svg size={16}><path d="M2 2h7v7H2zM11 2h7v7h-7zM2 11h7v7H2z" fill="#5aa6e8" /></Svg></span>
        <span className="w-[31px] text-[#dfe6ec]">毫米</span>
        <span className="flex w-[12px] justify-center"><Caret /></span>
        <span className="flex w-[37px] justify-center"><Svg size={17}><path d="M10 2l7 16-7-4-7 4z" fill="#5aa6e8" /></Svg></span>
        <span className="w-[18px] text-[#dfe6ec]">1:1</span>
        <span className="flex w-[12px] justify-center"><Caret /></span>
        <span className="flex w-[34px] justify-center"><Svg size={17}><path d="M10 2l7 16-7-4-7 4z" fill="#dfe6ec" /></Svg></span>
        <span className="flex w-[20px] justify-center"><Svg size={17}><path d="M10 2l7 16-7-4-7 4z" fill="#5aa6e8" /></Svg></span>
        <span className="flex w-[22px] justify-center"><Svg size={17}><circle cx="10" cy="10" r="6" stroke="#dfe6ec" strokeWidth="2.500" strokeDasharray="3 1" /></Svg></span>
        <span className="flex w-[20px] justify-center"><Svg size={17}><path d="M3 4h14M3 10h14M3 16h14" stroke="#dfe6ec" strokeWidth="1.500" /></Svg></span>
        <span className="flex w-[22px] justify-center"><Svg size={17}><path d="M3 3h14v14H3z" stroke="#5aa6e8" /><path d="M7 7h6v6H7z" fill="#dfe6ec" /></Svg></span>
        <span className="flex w-[20px] justify-center"><Svg size={17}><path d="M2 5h16v10H2z" stroke="#dfe6ec" /><path d="M5 8h3v4H5z" fill="#5aa6e8" /></Svg></span>
        <span className="flex w-[20px] justify-center"><Svg size={17}><path d="M4 2h12v16H4z" stroke="#dfe6ec" /><path d="M7 6h6M7 10h6" stroke="#5aa6e8" /></Svg></span>
      </div>
    </div>
  );
}

function LayoutTabs() {
  const nav = [
    <path key="1" d="M2 9l4-5 4 5z" fill="#fff" />,
    <path key="2" d="M3 2v8M9 2L5 6l4 4z" fill="#7b8694" stroke="#7b8694" />,
    <path key="3" d="M8 2L4 6l4 4z" fill="#9aa4b0" />,
    <path key="4" d="M4 2l4 4-4 4z" fill="#9aa4b0" />,
    <path key="5" d="M9 2v8M3 2l4 4-4 4z" fill="#7b8694" stroke="#7b8694" />,
  ];
  return (
    <div className="flex h-[15px] items-stretch gap-[1px] bg-[#2c2f33] text-[12px] leading-none text-[#e8e8e8]">
      {nav.map((p, i) => (
        <span key={i} className="flex w-[15px] items-center justify-center bg-[#3c4350]">
          <svg width="12" height="12" viewBox="0 0 12 12">{p}</svg>
        </span>
      ))}
      <span className="flex w-[49px] items-center justify-center bg-[#506072] font-bold text-white">模型</span>
      <span className="ml-[1px] flex w-[52px] items-center justify-center bg-[#3c4350]">布局1</span>
      <span className="ml-[2px] flex w-[52px] items-center justify-center bg-[#3c4350]">布局2</span>
      <span className="ml-[1px] flex w-[31px] items-center justify-center bg-[#3c4350] font-bold text-white">+</span>
    </div>
  );
}

export default function App() {
  return (
    <div className="relative h-[1029px] w-[1920px] overflow-hidden bg-[#303943] font-['Noto_Sans','Noto_Sans_CJK_SC',sans-serif]">
      <TopBars />
      <div className="flex h-[908px]">
        <div className="w-[1632px] shrink-0">
          <div className="flex h-[25px] items-end bg-[#2d3034]">
            <span className="flex h-[23px] w-[13px] items-center justify-center"><Caret /></span>
            <span className="flex h-[23px] w-[175px] items-center bg-[#506072] pl-[2px] pr-[7px]">
              <svg width="17" height="19" viewBox="0 0 17 19">
                <path d="M3 1h9l3 3v14H3z" fill="#fff" />
                <path d="M0 9h17v7H0z" fill="#1b72d0" />
                <text x="8.500" y="15" fontSize="6.500" fontWeight="700" textAnchor="middle" fill="#fff" fontFamily="Liberation Sans">DWG</text>
              </svg>
              <span className={`${mono} ml-[1px] text-[12px] font-bold tracking-[-0.2px] text-white`}>Drawing1.dwg*</span>
              <svg width="10" height="10" viewBox="0 0 10 10" className="ml-auto"><path d="M0 0l10 10M10 0L0 10" stroke="#fff" strokeWidth="1.600" /></svg>
            </span>
            <span className="ml-[2px] flex h-[23px] w-[26px] items-center justify-center bg-[#3c4350]">
              <Svg size={18}>{icons.file}</Svg>
            </span>
          </div>
          <div className="relative h-[834px] bg-black">
            <Drawing />
            <span className={`${mono} absolute left-[6px] top-[3px] text-[12px] tracking-[-0.6px] text-[#e0e0e0]`}>[-][俯视][二维线框][WCS]</span>
            <div className="absolute right-[12px] top-[11px] flex items-center gap-[10px]">
              <span className="mt-[5px] h-[3px] w-[10px] bg-[#e8e8e8]" />
              <span className="flex h-[9px] w-[9px] items-center justify-center border-2 border-[#e8e8e8]" />
              <svg width="9" height="9" viewBox="0 0 9 9"><path d="M0 0l9 9M9 0L0 9" stroke="#e8e8e8" strokeWidth="2" /></svg>
            </div>
          </div>
          <LayoutTabs />
          <div className="mt-[4px] h-[5px] bg-[#2c2f33]" />
          <div className="flex h-[25px] border-t border-[#5a6470] bg-[#2c2f33]">
            <span className="-mt-[6px] flex h-[29px] w-[21px] items-center justify-center bg-[#3e4653] text-[12px] font-bold text-[#767f8b]">X</span>
            <span className="ml-[2px] flex items-center text-[14px] tracking-[1px] text-[#c8c8c8]">命令:</span>
            <span className="ml-[9px] mt-[2px] h-[16px] w-[1px] bg-[#d0d0d0]" />
          </div>
        </div>
        <ToolStrip />
        <Properties />
      </div>
      <Status />
      <Dialog />
    </div>
  );
}
